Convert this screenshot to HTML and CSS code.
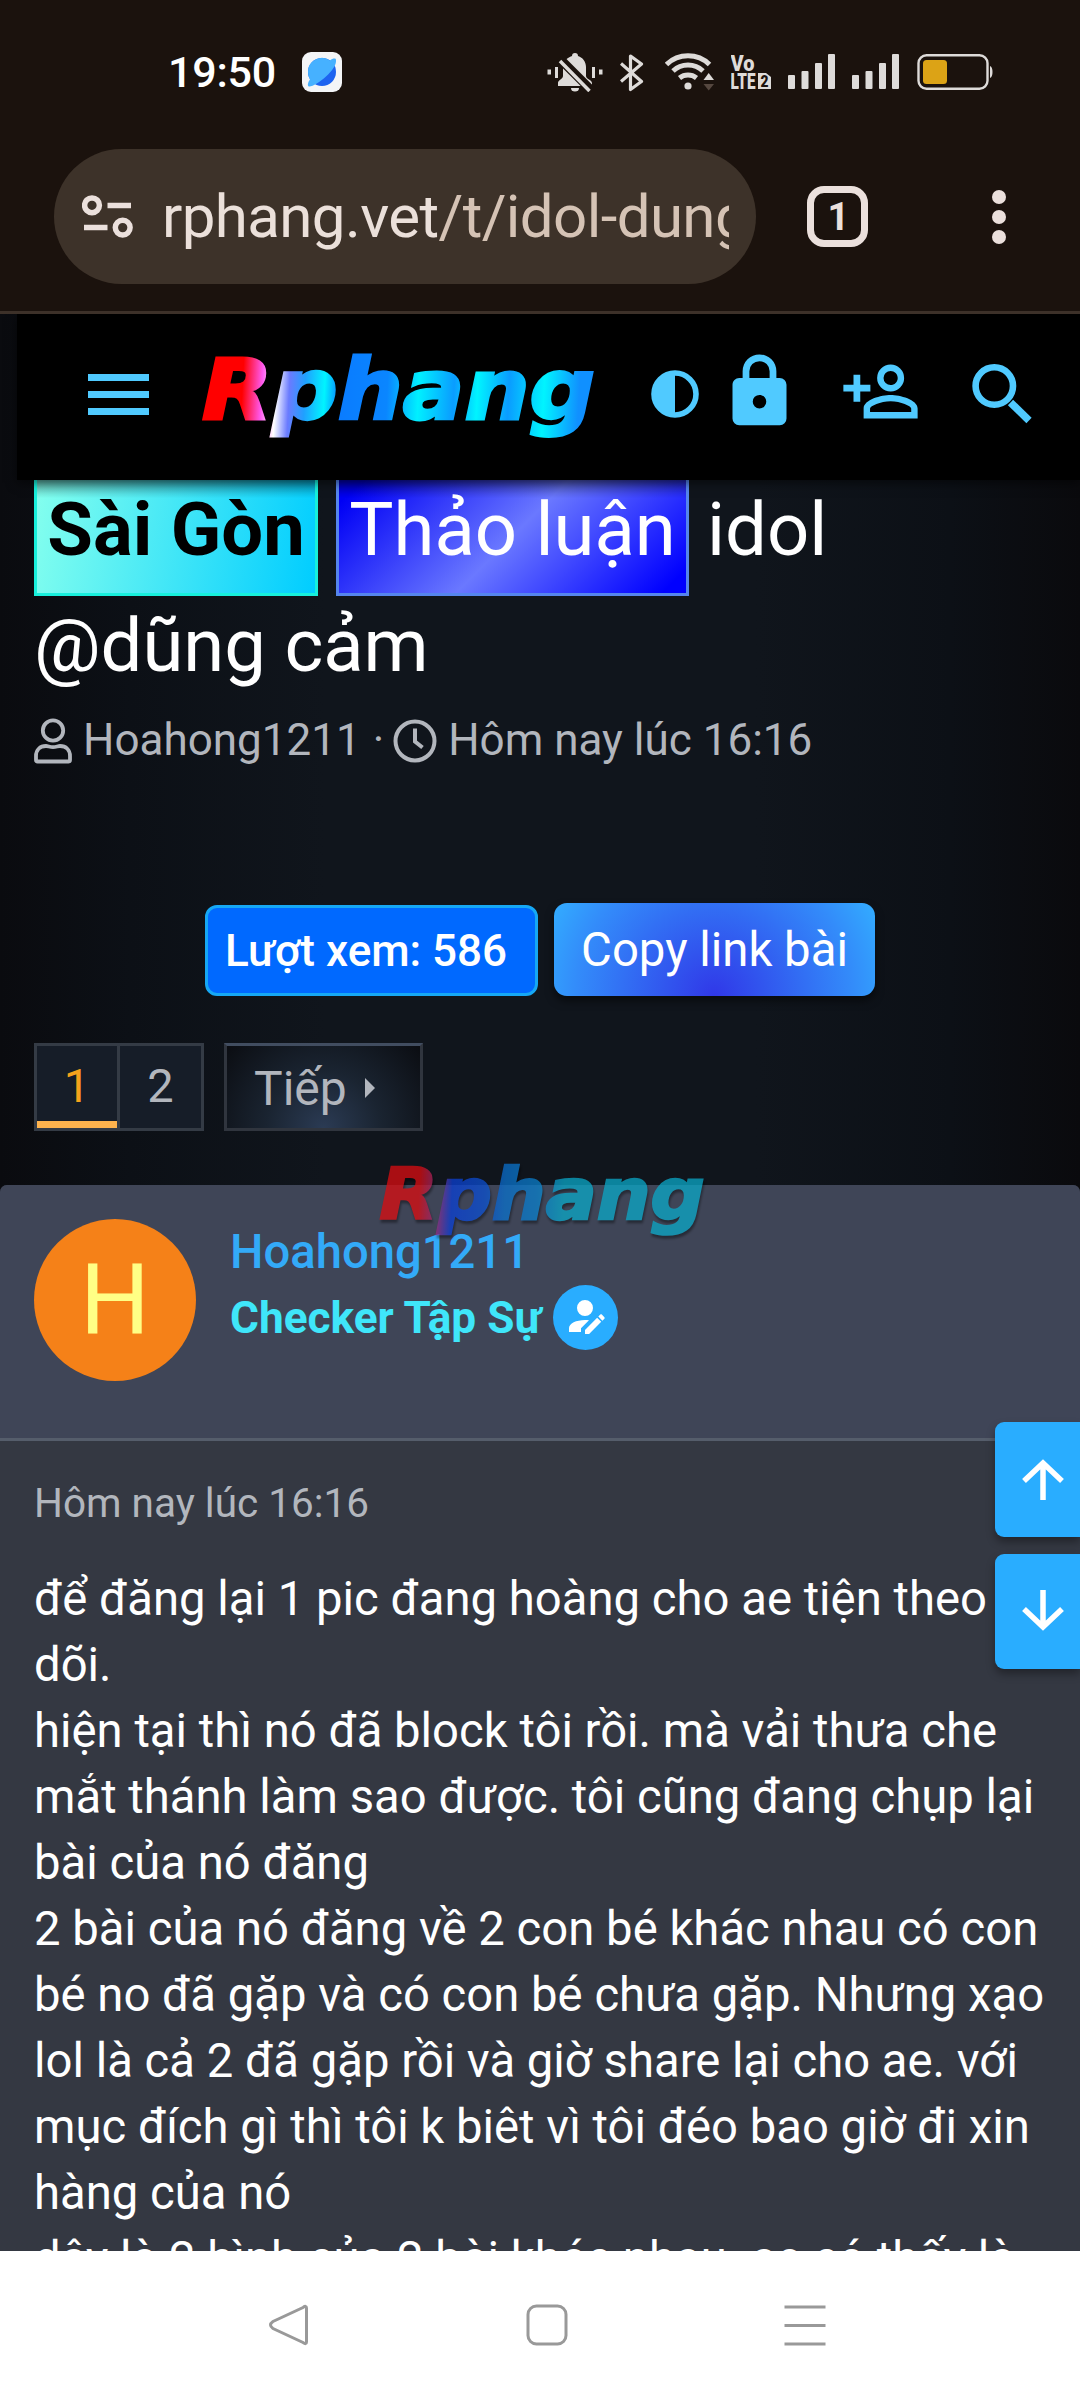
FILE: index.html
```html
<!DOCTYPE html>
<html lang="vi">
<head>
<meta charset="utf-8">
<title>Rphang</title>
<link rel="stylesheet" href="styles.css">
</head>
<body>
<div class="screen">
  <div class="chrome">
    <div class="status">
      <span class="clock">19:50</span>
      <svg class="app" width="40" height="40" viewBox="0 0 40 40"><rect width="40" height="40" rx="9" fill="#f4f5f7"/><circle cx="20" cy="20" r="14" fill="#1d63f0"/><path d="M6 20A14 14 0 0 1 28 8.500C31 6 34 6 34 8C34.500 13 30 19 24 24.500C18 30 10 35 7 34.500C5 34 6 30 8 27.500A14 14 0 0 1 6 20Z" fill="#46b1ff"/></svg>
      <div class="icons">
        <svg width="56" height="40" viewBox="547 52 56 40" fill="#dedbd9"><path d="M575 53c2 0 3 1 3 3 5 1.500 8 6 8 11v9c0 3 6 4 6 7v3h-34v-3c0-3 5-4 5-7v-9c0-5 4-9.500 9-11 0-2 1-3 3-3zM571 88h8a4 3.500 0 0 1-8 0z"/><path d="M559 58l32 32" stroke="#1b120d" stroke-width="9"/><path d="M560 61l29.500 30" stroke="#dedbd9" stroke-width="3.500"/><path d="M547.500 69.500h3.500v5h-3.500zM555 67h3v11h-3zM592 67h3v11h-3zM599 69.500h3.500v5h-3.500z"/></svg>
        <svg width="28" height="40" viewBox="620 52 28 40" fill="none" stroke="#dedbd9" stroke-width="3.200" stroke-linejoin="round"><path d="M621 63.500l20.500 18-11 8V56l11 8-20.500 17.500"/></svg>
        <svg width="49" height="40" viewBox="665 52 49 40" fill="none" stroke="#dedbd9" stroke-width="5"><path d="M666.500 64.500A31 31 0 0 1 709.500 64.500M673 71A22 22 0 0 1 703 71M679.500 78A14 14 0 0 1 696.500 78"/><circle cx="688" cy="86" r="3.600" fill="#dedbd9" stroke="none"/><path d="M703.500 80l5.200-7 5.300 7z" fill="#dedbd9" stroke="none"/><path d="M703.500 84l5.200 6.500 5.300-6.500z" fill="#55473f" stroke="none"/></svg>
        <svg width="40" height="40" viewBox="731 52 40 40" fill="#dedbd9" font-family="Roboto, sans-serif" font-weight="900"><text x="730.500" y="71" font-size="22" textLength="24" lengthAdjust="spacingAndGlyphs">Vo</text><text x="730.500" y="89" font-size="22" textLength="25" lengthAdjust="spacingAndGlyphs">LTE</text><path d="M758 73h8l5 4v12h-13z"/><text x="760.500" y="86.500" font-size="16" fill="#1b120d" textLength="8" lengthAdjust="spacingAndGlyphs">2</text></svg>
        <svg width="47" height="40" viewBox="788 52 47 40" fill="#dedbd9"><rect x="788" y="75" width="7" height="14" rx="1"/><rect x="801.500" y="71" width="7" height="18" rx="1"/><rect x="815" y="63" width="7" height="26" rx="1"/><rect x="828" y="54" width="7" height="35" rx="1"/></svg>
        <svg width="47" height="40" viewBox="788 52 47 40" fill="#dedbd9"><rect x="788" y="75" width="7" height="14" rx="1"/><rect x="801.500" y="71" width="7" height="18" rx="1"/><rect x="815" y="63" width="7" height="26" rx="1"/><rect x="828" y="54" width="7" height="35" rx="1"/></svg>
        <svg width="78" height="40" viewBox="916 52 78 40"><rect x="918.500" y="55.200" width="69" height="33.500" rx="8" fill="none" stroke="#dedbd9" stroke-width="2.400"/><rect x="923" y="60" width="24" height="24" rx="3.500" fill="#dca316"/><path d="M990 66v12q2.500-1 2.500-6t-2.500-6z" fill="#dedbd9"/></svg>
      </div>
    </div>
    <div class="toolbar">
      <div class="pill">
        <svg width="52" height="46" viewBox="82 194 52 46" fill="none" stroke="#ebe0dc" stroke-width="5.500"><circle cx="92" cy="205.300" r="7.400"/><path d="M107.500 205.500H131M84 227.500h23.500"/><circle cx="122.700" cy="227.600" r="7.400"/></svg>
        <div class="url">rphang.vet<span>/t/idol-dung</span></div>
      </div>
      <div class="tabs">1</div>
      <div class="dots"><i></i><i></i><i></i></div>
    </div>
  </div>

  <div class="site">
    <header class="head">
      <div class="burger"><i></i><i></i><i></i></div>
      <svg class="logo" width="400" height="110" viewBox="200 340 400 110">
        <defs><linearGradient id="neon" gradientUnits="userSpaceOnUse" x1="203" y1="390" x2="594" y2="410">
          <stop offset=".1" stop-color="#f00"/><stop offset=".15" stop-color="#ff5af0"/><stop offset=".185" stop-color="#fff"/><stop offset=".22" stop-color="#6a7bff"/><stop offset=".26" stop-color="#20a0ff"/><stop offset=".31" stop-color="#00f4ff"/><stop offset=".35" stop-color="#0a7cff"/><stop offset=".47" stop-color="#0a86ff"/><stop offset=".55" stop-color="#00f0ff"/><stop offset=".64" stop-color="#0a9cff"/><stop offset=".7" stop-color="#00f4ff"/><stop offset=".78" stop-color="#0a9cff"/><stop offset=".87" stop-color="#00f4ff"/><stop offset=".96" stop-color="#1090ff"/>
        </linearGradient></defs>
        <text x="202" y="419" textLength="393" lengthAdjust="spacingAndGlyphs" class="word" fill="url(#neon)" stroke="url(#neon)">Rphang</text>
      </svg>
      <div class="tools">
        <svg class="t1" width="48" height="48" viewBox="0 0 48 48"><circle cx="24" cy="24" r="21" fill="none" stroke="#50caff" stroke-width="5.600"/><path d="M24 2v44A22 22 0 0 1 24 2z" fill="#50caff"/></svg>
        <svg class="t2" width="81" height="81" viewBox="0 0 24 24" fill="#50caff"><path d="M12,17A2,2 0 0,0 14,15C14,13.890 13.100,13 12,13A2,2 0 0,0 10,15A2,2 0 0,0 12,17M18,8A2,2 0 0,1 20,10V20A2,2 0 0,1 18,22H6A2,2 0 0,1 4,20V10C4,8.890 4.900,8 6,8H7V6A5,5 0 0,1 12,1A5,5 0 0,1 17,6V8H18M12,3A3,3 0 0,0 9,6V8H15V6A3,3 0 0,0 12,3Z"/></svg>
        <svg class="t3" width="81" height="81" viewBox="0 0 24 24" fill="#50caff"><path d="M15,4A4,4 0 0,0 11,8A4,4 0 0,0 15,12A4,4 0 0,0 19,8A4,4 0 0,0 15,4M15,5.900C16.160,5.900 17.100,6.840 17.100,8C17.100,9.160 16.160,10.100 15,10.100A2.100,2.100 0 0,1 12.900,8A2.100,2.100 0 0,1 15,5.900M4,7V10H1V12H4V15H6V12H9V10H6V7H4M15,13C12.330,13 7,14.330 7,17V20H23V17C23,14.330 17.670,13 15,13M15,14.900C17.970,14.900 21.100,16.360 21.100,17V18.100H8.900V17C8.900,16.360 12,14.900 15,14.900Z"/></svg>
        <svg class="t4" width="60" height="60" viewBox="0 0 60 60" fill="none" stroke="#50caff"><circle cx="22.300" cy="22" r="18.700" stroke-width="6.600"/><path d="M38.500 38.500l18.500 18" stroke-width="7.500"/></svg>
      </div>
    </header>

    <div class="title">
      <span class="tag sg">Sài Gòn</span><span class="tag tl">Thảo luận</span><span class="rest">idol</span>
    </div>
    <div class="title2">@dũng cảm</div>

    <div class="meta">
      <svg width="38" height="46" viewBox="0 0 38 46" fill="none" stroke="#b2b6bd" stroke-width="3.800" stroke-linejoin="round"><circle cx="19" cy="12.500" r="10.200"/><path d="M2 42v-4c0-6 4-10 10-10 2 0 4 1.200 7 1.200s5-1.200 7-1.200c6 0 10 4 10 10v4q0 1.500-1.500 1.500h-31Q2 43.500 2 42z"/></svg>
      <span class="who">Hoahong1211</span><span class="sep">·</span>
      <svg width="44" height="44" viewBox="0 0 44 44" fill="none" stroke="#b2b6bd" stroke-width="4"><circle cx="22" cy="22" r="19.500"/><path d="M22 9.500V22.500l7.500 6"/></svg>
      <span class="when">Hôm nay lúc 16:16</span>
    </div>

    <div class="actions">
      <div class="views">Lượt xem: 586</div>
      <div class="copy">Copy link bài</div>
    </div>

    <div class="pager">
      <div class="pages"><span class="pg on">1</span><span class="pg">2</span></div>
      <div class="next"><span>Tiếp</span><i></i></div>
    </div>

    <article class="post">
      <div class="author">
        <div class="avatar">H</div>
        <div class="ident">
          <div class="name">Hoahong1211</div>
          <div class="rank"><span>Checker Tập Sự</span><div class="badge"><svg width="48" height="48" viewBox="0 0 24 24" fill="#fff"><path d="M21.700,13.350L20.700,14.350L18.650,12.300L19.650,11.300C19.860,11.090 20.210,11.090 20.420,11.300L21.700,12.580C21.910,12.790 21.910,13.140 21.700,13.350M12,18.940L18.060,12.880L20.110,14.930L14.060,21H12V18.940M12,14C7.580,14 4,15.790 4,18V20H10V18.110L14,14.110C13.340,14.030 12.670,14 12,14M12,4A4,4 0 0,0 8,8A4,4 0 0,0 12,12A4,4 0 0,0 16,8A4,4 0 0,0 12,4Z"/></svg></div></div>
        </div>
      </div>
      <svg class="mark" width="336" height="93" viewBox="200 340 400 110">
        <defs><linearGradient id="dim" gradientUnits="userSpaceOnUse" x1="203" y1="390" x2="594" y2="410">
          <stop offset=".12" stop-color="#dc0c10"/><stop offset=".18" stop-color="#8a2f86"/><stop offset=".22" stop-color="#0a3fd4"/><stop offset=".32" stop-color="#0c50d0"/><stop offset=".38" stop-color="#0a70cc"/><stop offset=".48" stop-color="#0a80cc"/><stop offset=".56" stop-color="#0aa8c8"/>
        </linearGradient></defs>
        <text x="203" y="418" textLength="387" lengthAdjust="spacingAndGlyphs" class="word" fill="url(#dim)" stroke="url(#dim)">Rphang</text>
      </svg>
      <div class="date">Hôm nay lúc 16:16</div>
      <div class="body">để đăng lại 1 pic đang hoàng cho ae tiện theo<br>dõi.<br>hiện tại thì nó đã block tôi rồi. mà vải thưa che<br>mắt thánh làm sao được. tôi cũng đang chụp lại<br>bài của nó đăng<br>2 bài của nó đăng về 2 con bé khác nhau có con<br>bé no đã gặp và có con bé chưa gặp. Nhưng xạo<br>lol là cả 2 đã gặp rồi và giờ share lại cho ae. với<br>mục đích gì thì tôi k biêt vì tôi đéo bao giờ đi xin<br>hàng của nó<br>dây là 2 hình của 2 bài khác nhau. ae có thấy là</div>
    </article>

    <div class="jump">
      <div><svg width="46" height="46" viewBox="0 0 46 46" fill="none" stroke="#fff" stroke-width="5.500"><path d="M23 44V7M4 25L23 7l19 18"/></svg></div>
      <div><svg width="46" height="46" viewBox="0 0 46 46" fill="none" stroke="#fff" stroke-width="5.500"><path d="M23 2V39M4 21L23 39l19-18"/></svg></div>
    </div>
  </div>

  <nav class="sysnav">
    <svg width="40" height="44" viewBox="0 0 40 44"><path d="M34 4.500Q37.500 2 37.500 5V39Q37.500 42 34 39.500L4 25.500Q-1 22 4 18.500Z" fill="none" stroke="#999" stroke-width="3"/></svg>
    <svg width="44" height="44" viewBox="0 0 44 44"><rect x="3" y="3" width="38" height="38" rx="8.500" fill="none" stroke="#999" stroke-width="3"/></svg>
    <svg width="44" height="44" viewBox="0 0 44 44"><path d="M1.500 4h41M1.500 22.500h41M1.500 41h41" stroke="#999" stroke-width="3.200"/></svg>
  </nav>
</div>
</body>
</html>
```
FILE: styles.css
```css
* { box-sizing: border-box; }
body { margin: 0; font-family: Roboto, "Noto Sans", sans-serif; }
svg { display: block; flex: none; }
.screen { width: 1080px; height: 2400px; display: flex; flex-direction: column; overflow: hidden; }

.chrome { height: 314px; flex: none; background: #1b120d; border-bottom: 3px solid #3d3129; padding-top: 52px; }
.status { display: flex; height: 40px; padding-left: 168px; align-items: center; }
.clock { width: 134px; font-size: 43px; font-weight: 500; line-height: 40px; color: #fff; white-space: nowrap; letter-spacing: -0.2px; }
.icons { display: flex; gap: 17px; margin-left: 205px; }
.toolbar { display: flex; align-items: center; margin-top: 57px; padding-left: 54px; height: 135px; }
.pill { width: 702px; height: 135px; border-radius: 68px; background: #3d3229; display: flex; align-items: center; padding-left: 28px; }
.url { margin-left: 28px; width: 567px; overflow: hidden; white-space: nowrap; font-size: 60px; line-height: 90px; color: #ebe0da; letter-spacing: -0.6px; }
.url span { color: #d5c3b5; }
.tabs { margin-left: 51px; width: 61px; height: 61px; border: 7px solid #ebe0dc; border-radius: 17px; color: #ebe0dc; font-size: 38px; font-weight: 700; line-height: 48px; text-align: center; padding-left: 2px; }
.dots { margin-left: 124px; display: flex; flex-direction: column; gap: 6px; }
.dots i { width: 14px; height: 14px; border-radius: 50%; background: #ebe0dc; }

.site { position: relative; height: 1937px; flex: none; overflow: hidden; background: linear-gradient(90deg, #0a0b0f 0, #0c1016 12%, #10151c 30%, #10151c 70%, #0c1016 88%, #0a0a0d 100%); }
.head { position: relative; height: 166px; margin-left: 17px; background: #000; display: flex; align-items: center; box-shadow: 0 3px 10px rgba(0,0,0,.55); }
.burger { display: flex; flex-direction: column; gap: 10px; margin: -5px 0 0 71px; }
.burger i { width: 61px; height: 7px; background: #50caff; }
.logo { margin: -4px 0 0 51px; }
.word { font: italic 700 84px "DejaVu Sans", sans-serif; stroke-width: 3px; }
.tools { display: flex; align-items: flex-start; height: 166px; }
.t1 { margin: 56px 0 0 51px; }
.t2 { margin: 37px 0 0 20px; }
.t3 { margin: 37px 0 0 40px; }
.t4 { margin: 50px 0 0 51px; }

.title { display: flex; padding-left: 34px; height: 116px; font-size: 74.2px; line-height: 99px; color: #fff; white-space: nowrap; }
.tag { height: 116px; border: 3px solid; border-top: 0; text-align: center; }
.sg { width: 284px; border-color: #17f0dc; color: #000; font-weight: 700; background: linear-gradient(rgba(0,0,0,.35), transparent 18px), linear-gradient(100deg, #84ffee, #00cdff); }
.tl { width: 353px; margin-left: 18px; border-color: #5585ee; background: linear-gradient(rgba(0,0,0,.35), transparent 18px), linear-gradient(135deg, #0000f5 5%, #6a78ff 50%, #0000ff 95%); }
.rest { margin-left: 18px; }
.title2 { padding-left: 34px; font-size: 74.2px; line-height: 100px; color: #fff; height: 117px; }

.meta { display: flex; align-items: center; height: 55px; padding-left: 34px; color: #b2b6bd; font-size: 44px; line-height: 53px; white-space: nowrap; }
.who { margin-left: 11px; }
.sep { margin: 0 9px 0 12px; }
.when { margin-left: 11px; }

.actions { display: flex; align-items: flex-end; gap: 16px; margin-top: 135px; padding-left: 205px; height: 93px; }
.views { width: 333px; height: 91px; border: 3px solid #16a8f5; border-radius: 12px; background: #0069ff; color: #fff; font-size: 44px; font-weight: 500; line-height: 87px; padding-left: 17px; white-space: nowrap; }
.copy { width: 321px; height: 93px; border-radius: 13px; color: #fff; font-size: 47.3px; line-height: 94px; text-align: center; white-space: nowrap; background: radial-gradient(circle at 50% 100%, #3038e8 0, #338cfa 75%, #33adff 100%); box-shadow: 0 5px 8px rgba(0,0,0,.5); }

.pager { display: flex; margin-top: 47px; padding-left: 34px; height: 88px; gap: 20px; }
.pages { width: 170px; display: flex; border: 3px solid #343b45; background: #161d28; }
.pg { flex: 1; text-align: center; font-size: 47px; line-height: 80px; color: #b2b6bd; }
.pg.on { flex: 0 0 80px; margin-right: 3px; color: #f5a31c; border-bottom: 7px solid #ffb34d; box-shadow: 3px 0 0 #343b45; }
.next { width: 199px; display: flex; align-items: center; padding: 2px 0 0 27px; border: 3px solid #30353e; border-top-color: #414d60; background: radial-gradient(circle at 50% 100%, #2b3b54 0, #1a2431 45%, #0b0d12 100%); color: #b2b6bd; font-size: 48px; }
.next i { margin-left: 18px; border: solid transparent; border-width: 10px 0 10px 10px; border-left-color: #b2b6bd; }

.post { position: relative; margin-top: 54px; background: #343842; border-radius: 7px 7px 0 0; height: 1100px; }
.mark { position: absolute; left: 377px; top: -32px; opacity: .75; filter: drop-shadow(1px 3px 1px rgba(0,0,0,.5)); }
.author { height: 256px; padding: 34px 0 0 34px; display: flex; background: #3f4557; border-bottom: 3px solid #555d6b; border-radius: 7px 7px 0 0; }
.avatar { width: 162px; height: 162px; border-radius: 50%; background: #f58118; color: #ffff85; font-size: 98px; line-height: 161px; text-align: center; }
.ident { margin-left: 34px; }
.name { color: #33aaf8; font-size: 47.2px; font-weight: 500; line-height: 66px; height: 66px; }
.rank { display: flex; align-items: center; height: 65px; color: #3fe6fa; font-size: 44.2px; font-weight: 700; white-space: nowrap; }
.badge { margin-left: 12px; width: 65px; height: 65px; border-radius: 50%; background: #29adff; padding: 7px 0 0 8px; }
.date { padding: 37px 0 0 34px; font-size: 40.5px; line-height: 50px; color: #b2b6bd; height: 124px; }
.body { padding-left: 34px; font-size: 47.25px; line-height: 66px; color: #fff; white-space: nowrap; margin-top: 1px; }

.jump { position: absolute; right: 0; top: 1108px; display: flex; flex-direction: column; gap: 17px; }
.jump div { width: 85px; height: 115px; background: #29adff; border-radius: 9px 0 0 9px; padding: 34px 0 0 25px; box-shadow: 0 5px 9px rgba(0,0,0,.35); }

.sysnav { height: 149px; background: #fff; display: flex; align-items: flex-start; padding: 52px 0 0 269px; }
.sysnav svg:nth-child(2) { margin-left: 216px; }
.sysnav svg:nth-child(3) { margin-left: 214px; }
```
